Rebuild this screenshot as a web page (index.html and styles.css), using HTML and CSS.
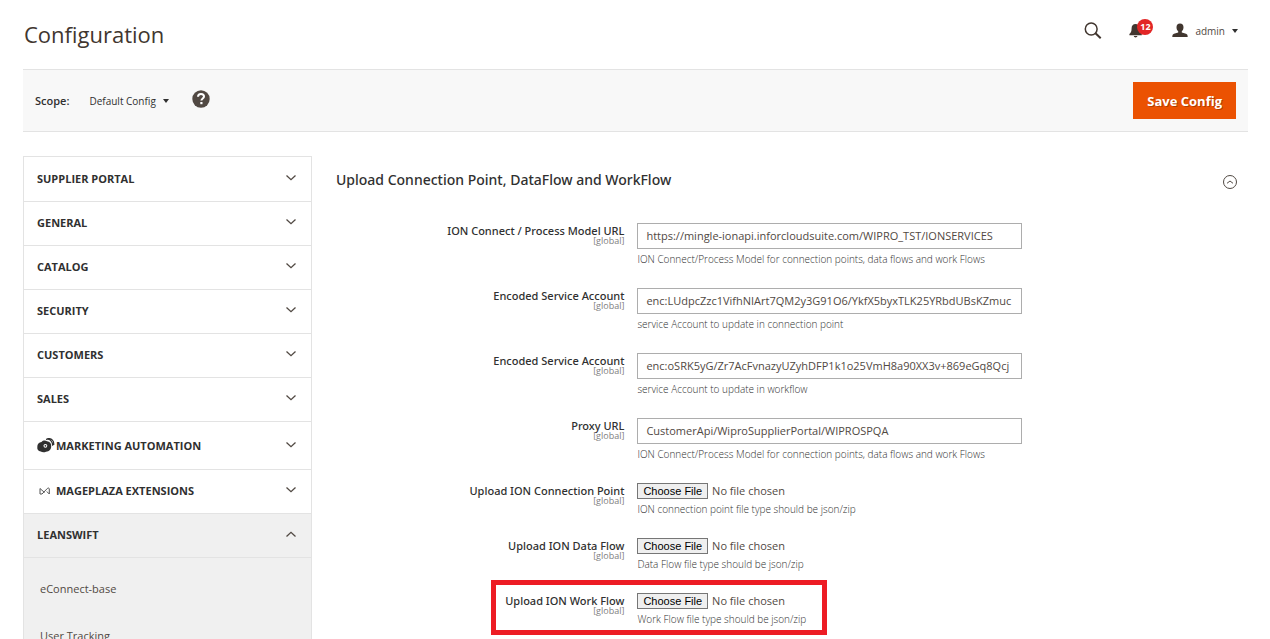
FILE: index.html
```html
<!DOCTYPE html>
<html lang="en">
<head>
<meta charset="utf-8">
<title>Configuration</title>
<meta name="viewport" content="width=device-width, initial-scale=1">
<link rel="stylesheet" href="styles.css">
</head>
<body>
<svg class="sprite" aria-hidden="true">
  <symbol id="chevron" viewBox="0 0 12 8"><path d="M1.500 1.500 6 5.700l4.500-4.200" fill="none" stroke="currentColor" stroke-width="1.300"/></symbol>
</svg>
<header class="header">
  <h1 class="title">Configuration</h1>
  <div class="tools">
    <button class="tool" type="button" aria-label="Search">
      <svg width="18" height="18" viewBox="0 0 18 18" fill="none" stroke="#41362f"><circle cx="7.200" cy="7" r="5.900" stroke-width="1.500"/><path d="m11.500 11.300 5.200 5" stroke-width="2"/></svg>
    </button>
    <button class="tool bell" type="button" aria-label="Notifications">
      <svg width="14" height="15" viewBox="0 0 14 15" fill="#41362f"><path d="M6.500 1c2.600 0 4 1.700 4 4.300 0 3 .8 4.500 2.300 5.600v1.300H.4v-1.300C2 9.700 2.600 8.200 2.600 5.300 2.600 2.700 4 1 6.500 1ZM4.800 13h3.600c-.2 1-.9 1.400-1.800 1.400S5 14 4.800 13Z"/></svg>
      <span class="badge">12</span>
    </button>
    <button class="tool account" type="button">
      <svg width="16" height="15" viewBox="0 0 16 15" fill="#41362f"><path d="M8 .5c2.300 0 3.500 1.500 3.500 3.700 0 1.800-.7 3.200-1.700 4v1.300l4.200 1.300c1.200.4 1.700 1.300 1.700 3.200H.3c0-1.900.5-2.800 1.700-3.200l4.200-1.300V8.200c-1-.8-1.700-2.200-1.700-4C4.500 2 5.700.5 8 .5Z"/></svg>
      <span>admin</span>
      <span class="caret"></span>
    </button>
  </div>
</header>

<section class="toolbar">
  <span class="scope-label">Scope:</span>
  <button class="scope" type="button">Default Config <span class="caret"></span></button>
  <a class="help" href="#" aria-label="Help"><svg width="18" height="18" viewBox="0 0 18 18"><circle cx="9" cy="9" r="8.700" fill="#514943"/><path d="M6 6.800C6 5 7.200 4 9 4s3 1 3 2.600c0 1.900-2.600 2-2.600 4" fill="none" stroke="#fff" stroke-width="2"/><path d="M8.300 12h2.200v2.200H8.300z" fill="#fff"/></svg></a>
  <button class="save" type="button">Save Config</button>
</section>

<div class="columns">
  <nav class="nav" aria-label="Configuration sections">
    <button class="nav-item" type="button">SUPPLIER PORTAL<svg class="chevron"><use href="#chevron"/></svg></button>
    <button class="nav-item" type="button">GENERAL<svg class="chevron"><use href="#chevron"/></svg></button>
    <button class="nav-item" type="button">CATALOG<svg class="chevron"><use href="#chevron"/></svg></button>
    <button class="nav-item" type="button">SECURITY<svg class="chevron"><use href="#chevron"/></svg></button>
    <button class="nav-item" type="button">CUSTOMERS<svg class="chevron"><use href="#chevron"/></svg></button>
    <button class="nav-item" type="button">SALES<svg class="chevron"><use href="#chevron"/></svg></button>
    <button class="nav-item tall" type="button">
      <svg class="brand" width="18" height="16" viewBox="0 0 18 16"><path d="M4.500 4C6 2.300 8.500 2.300 10 3.200c2.800.2 4.400 2.200 4.200 4.700.2 3.300-2 5.500-5.200 5.800-2 .8-4 .6-5.200-.3C1.200 13.200 0 11.400.3 9 .2 6.300 2 4.300 4.500 4Z" fill="#303030"/><circle cx="8.400" cy="7.800" r="1.900" fill="#fff"/><circle cx="8.400" cy="7.800" r=".9" fill="#303030"/><path d="M9 1.300c4-.8 6.700 2 6.700 6.500M10.500.5c4.300-.3 6.700 2.600 6.200 6.500" fill="none" stroke="#303030" stroke-width="1.200"/></svg>
      MARKETING AUTOMATION<svg class="chevron"><use href="#chevron"/></svg></button>
    <button class="nav-item" type="button">
      <svg class="brand" width="18" height="10" viewBox="0 0 18 10"><path d="M3 8V2.500l4.500 4M3 8h2l5.300-5.500c.8-.8 2-.6 2 .5v5L9.800 5.500" fill="none" stroke="#555"/></svg>
      MAGEPLAZA EXTENSIONS<svg class="chevron"><use href="#chevron"/></svg></button>
    <button class="nav-item active" type="button" aria-expanded="true">LEANSWIFT<svg class="chevron up"><use href="#chevron"/></svg></button>
    <div class="subnav">
      <a href="#">eConnect-base</a>
      <a href="#">User Tracking</a>
    </div>
  </nav>

  <main class="main">
    <div class="section-head">
      <h2>Upload Connection Point, DataFlow and WorkFlow</h2>
      <button class="collapse" type="button" aria-label="Collapse section"><svg width="16" height="16" viewBox="0 0 16 16" fill="none" stroke="#514943"><circle cx="8" cy="8" r="6.500"/><path d="m5 9.300 3-2.300 3 2.300"/></svg></button>
    </div>
    <form class="fields">
      <div class="row">
        <label for="url">ION Connect / Process Model URL<small>[global]</small></label>
        <div class="value"><input id="url" type="text" value="https://mingle-ionapi.inforcloudsuite.com/WIPRO_TST/IONSERVICES"><p>ION Connect/Process Model for connection points, data flows and work Flows</p></div>
      </div>
      <div class="row">
        <label for="acc1">Encoded Service Account<small>[global]</small></label>
        <div class="value"><input id="acc1" type="text" value="enc:LUdpcZzc1VifhNIArt7QM2y3G91O6/YkfX5byxTLK25YRbdUBsKZmuc"><p>service Account to update in connection point</p></div>
      </div>
      <div class="row">
        <label for="acc2">Encoded Service Account<small>[global]</small></label>
        <div class="value"><input id="acc2" type="text" value="enc:oSRK5yG/Zr7AcFvnazyUZyhDFP1k1o25VmH8a90XX3v+869eGq8Qcj"><p>service Account to update in workflow</p></div>
      </div>
      <div class="row">
        <label for="proxy">Proxy URL<small>[global]</small></label>
        <div class="value"><input id="proxy" type="text" value="CustomerApi/WiproSupplierPortal/WIPROSPQA"><p>ION Connect/Process Model for connection points, data flows and work Flows</p></div>
      </div>
      <div class="row file">
        <label for="f1">Upload ION Connection Point<small>[global]</small></label>
        <div class="value"><input id="f1" type="file"><p>ION connection point file type should be json/zip</p></div>
      </div>
      <div class="row file">
        <label for="f2">Upload ION Data Flow<small>[global]</small></label>
        <div class="value"><input id="f2" type="file"><p>Data Flow file type should be json/zip</p></div>
      </div>
      <div class="row file marked">
        <label for="f3">Upload ION Work Flow<small>[global]</small></label>
        <div class="value"><input id="f3" type="file"><p>Work Flow file type should be json/zip</p></div>
      </div>
    </form>
  </main>
</div>
</body>
</html>
```
FILE: styles.css
```css
*, *::before, *::after { box-sizing: border-box; }
html { height: 100%; overflow: hidden; }
body {
  height: 100%;
  overflow: hidden;
  margin: 0;
  padding: 0 22px 0 23px;
  font: 11px/16px "Open Sans", "Noto Sans", sans-serif;
  color: #303030;
  background: #fff;
}
button, input { font: inherit; color: inherit; }
button { padding: 0; border: 0; background: none; }
a { color: inherit; text-decoration: none; }
.sprite { display: none; }

.header {
  display: flex;
  justify-content: space-between;
  align-items: center;
  height: 69px;
  padding: 0 10px 2px 1px;
}
.title { margin: 0; font-size: 22px; line-height: 32px; font-weight: 400; color: #41362f; }
.tools { display: flex; align-items: center; gap: 27px; padding-bottom: 6px; }
.tool { display: flex; align-items: center; color: #514943; }
.bell { position: relative; padding-right: 10px; }
.badge {
  position: absolute;
  top: -4px;
  left: 8px;
  width: 16px;
  height: 16px;
  border-radius: 50%;
  background: #e22626;
  color: #fff;
  font-size: 9px;
  line-height: 16px;
  font-weight: 700;
  text-align: center;
}
.account { gap: 7px; margin-left: -8px; font-size: 10px; }
.caret {
  display: inline-block;
  border: 3px solid transparent;
  border-top: 4px solid #303030;
  border-bottom: 0;
}

.toolbar {
  display: flex;
  align-items: center;
  height: 63px;
  padding: 0 12px;
  border: solid #e3e3e3;
  border-width: 1px 0;
  background: #f8f8f8;
}
.scope-label { font-weight: 600; }
.scope { display: flex; align-items: center; gap: 7px; margin-left: 20px; font-size: 10px; }
.help { display: flex; margin: 0 auto 3px 23px; }
.save {
  height: 37px;
  padding: 0 14px;
  background: #eb5202;
  color: #fff;
  font-size: 13px;
  font-weight: 700;
  text-shadow: 1px 1px 0 rgba(0, 0, 0, .25);
}

.columns { display: flex; gap: 24px; padding-top: 24px; }
.nav { flex: 0 0 289px; padding-top: 1px; border: 1px solid #e3e3e3; }
.nav-item {
  display: flex;
  align-items: center;
  width: 100%;
  height: 44px;
  padding: 0 14px 2px 13px;
  border-bottom: 1px solid #e3e3e3;
  font-weight: 700;
  text-align: left;
}
.nav-item.tall { height: 48px; padding-bottom: 0; }
.nav-item.active { background: #f0f0f0; }
.brand { margin-right: 1px; }
.chevron { width: 12px; height: 8px; margin: 0 0 2px auto; color: #514943; }
.chevron.up { transform: rotate(180deg); }
.subnav {
  display: flex;
  flex-direction: column;
  gap: 31px;
  padding: 23px 16px 40px;
  background: #f0f0f0;
  color: #514943;
}

.main { flex: 1; }
.section-head { display: flex; justify-content: space-between; align-items: center; padding: 13px 10px 0 0; }
h2 { margin: 0; font-family: "Noto Sans", "Open Sans", sans-serif; font-size: 14px; line-height: 22px; font-weight: 500; }
.collapse { display: flex; padding-top: 4px; }

.fields { padding: 32px 12px 0 0; }
.row {
  display: grid;
  grid-template-columns: 33fr 44fr 23fr;
  column-gap: 13px;
  margin-bottom: 22px;
}
.row label { padding-top: 2px; text-align: right; font-family: "Noto Sans", "Open Sans", sans-serif; font-weight: 500; line-height: 12px; }
.row small { display: block; font-family: "Open Sans", sans-serif; font-size: 9px; line-height: 8px; font-weight: 400; color: #808080; }
.value { color: #514943; min-width: 0; }
.value p { margin: 4px 0 0; font-size: 10px; line-height: 13px; font-weight: 300; color: #303030; }
.value input { display: block; width: 100%; }
.value input[type="text"] {
  height: 26px;
  padding: 0 8px 1px;
  border: 1px solid #adadad;
  background: #fff;
}
.row.file { margin-bottom: 22px; }
.file .value input { height: 16px; line-height: 16px; }
.file .value input::file-selector-button {
  height: 16px;
  margin: 0 4px 0 0;
  padding: 0 5px;
  border: 1px solid #767676;
  background: #efefef;
  color: #000;
  font: 11px/14px "Liberation Sans", Arial, sans-serif;
}
.marked { position: relative; }
.marked::after {
  content: "";
  position: absolute;
  top: -13px;
  left: 155px;
  width: 336px;
  height: 55px;
  border: 5px solid #ed1c24;
  pointer-events: none;
}
```
